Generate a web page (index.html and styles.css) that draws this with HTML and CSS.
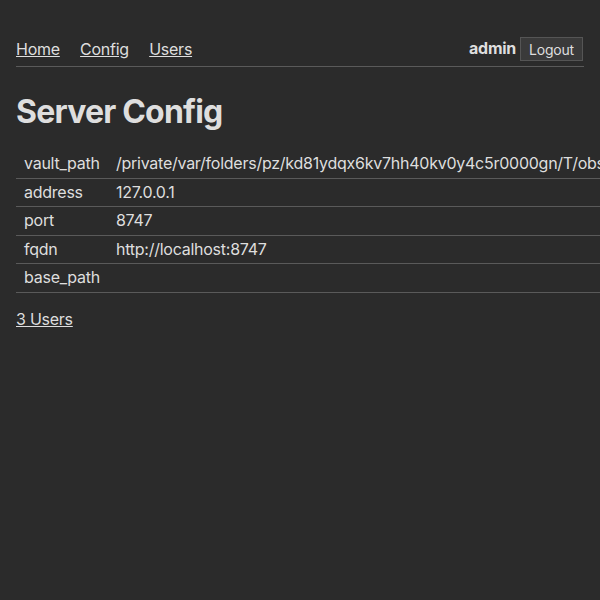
FILE: index.html
```html
<!DOCTYPE html>
<html>
<head>
  <meta charset="utf-8">
  <title>Server Config</title>
<link rel="stylesheet" href="styles.css">
</head>
<body>
    <nav>
        <div class="links">
            <a href="#">Home</a>
            <a href="#">Config</a>
            <a href="#">Users</a>
        </div>
        <div class="user">
            <b>admin</b>
            <button>Logout</button>
        </div>
    </nav>
    <h1>Server Config</h1>
    <table>
        <tr><td>vault_path</td><td>/private/var/folders/pz/kd81ydqx6kv7hh40kv0y4c5r0000gn/T/obs_sync_test_vault</td></tr>
        <tr><td>address</td><td>127.0.0.1</td></tr>
        <tr><td>port</td><td>8747</td></tr>
        <tr><td>fqdn</td><td>http://localhost:8747</td></tr>
        <tr><td>base_path</td><td></td></tr>
    </table>
    <p><a href="#">3 Users</a></p>
</body>
</html>
```

FILE: styles.css
```css
*{font-family:Inter,'Noto Sans',sans-serif;box-sizing:border-box}
body {
    margin: 0;
    padding: 37px 16px 16px;
    background-color: #2b2b2b;
    color: #dedede;
    font-size: 16px;
    letter-spacing: -0.25px;
}
a {
    color: #dedede;
}
nav {
    display: flex;
    justify-content: space-between;
    align-items: center;
    border-bottom: 1px solid #5a5a5a;
    padding-bottom: 5px;
}
nav .links a {
    margin-right: 16px;
}
nav .user {
    display: flex;
    align-items: center;
    gap: 4px;
}
nav .user b {
    font-weight: 700;
    position: relative;
    top: -1px;
}
button {
    background-color: #3a3a3a;
    color: #dedede;
    border: 1px solid #555;
    font-size: 14px;
    letter-spacing: -0.2px;
    padding: 3px 8px;
    height: 24px;
    margin-right: 1px;
}
h1 {
    font-size: 32px;
    letter-spacing: -0.8px;
    margin: 25px 0 19px;
}
table {
    border-collapse: collapse;
    white-space: nowrap;
}
td {
    padding: 4px 8px;
    line-height: 19.5px;
    border-bottom: 1px solid #5a5a5a;
}
p {
    margin: 16px 0;
}
```
